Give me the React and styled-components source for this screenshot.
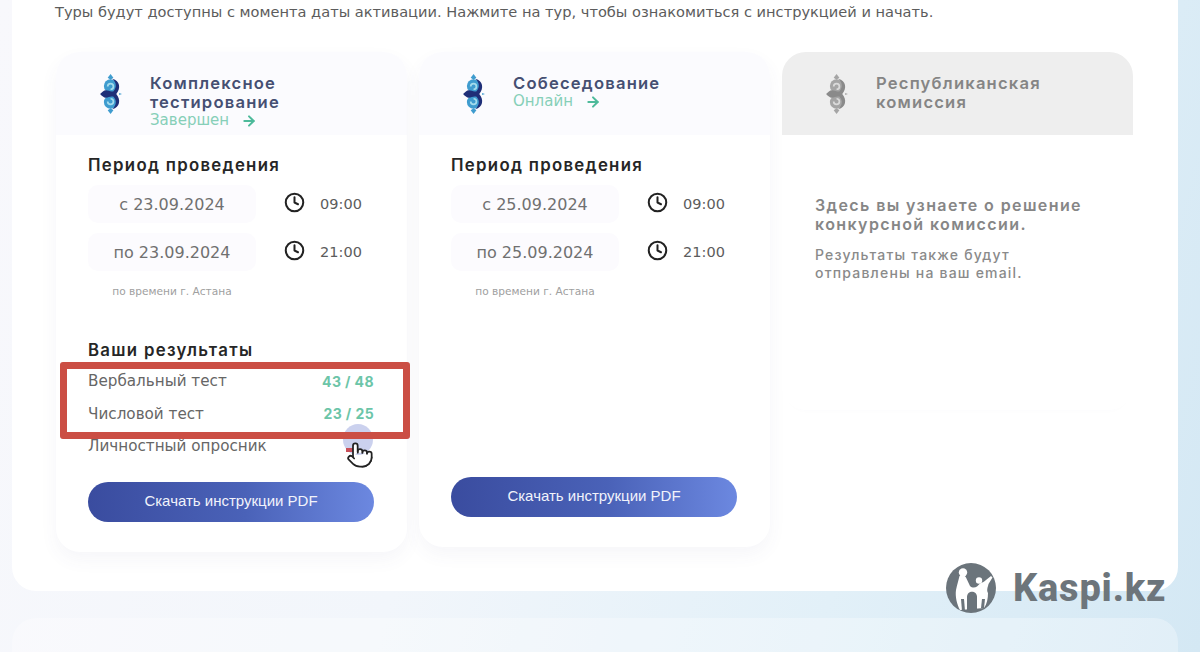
import React from 'react';
import styled, { createGlobalStyle } from 'styled-components';
import { ArrowRight, Clock, Pointer } from 'lucide-react';

const GlobalStyle = createGlobalStyle`
    html, body {
        margin: 0;
        height: 652px;
        overflow: hidden;
    }
    body {
        font-family: 'DejaVu Sans', 'Liberation Sans', sans-serif;
        color: #222;
    }
`;

const tours = [
    {
        id: 1,
        title: ['Комплексное', 'тестирование'],
        status: 'Завершен',
        from: 'с 23.09.2024',
        to: 'по 23.09.2024',
        height: 500,
        results: [
            { name: 'Вербальный тест', value: '43 / 48' },
            { name: 'Числовой тест', value: '23 / 25' },
            { name: 'Личностный опросник', value: '' },
        ],
    },
    {
        id: 2,
        title: ['Собеседование'],
        status: 'Онлайн',
        from: 'с 25.09.2024',
        to: 'по 25.09.2024',
        height: 495,
    },
];

const Ornament = ({ dark = '#1f2f78', light = '#3f9ccf', pale = '#a5dcec' }) => (
    <svg width="23" height="40" viewBox="0 0 24 42" fill="none">
        <path d="M11 0l3 4-3 2-3-2z" fill={light} />
        <path d="M11 42l3-4-3-2-3 2z" fill={light} />
        <circle cx="11" cy="12.5" r="7" fill={light} />
        <circle cx="11" cy="29.5" r="7" fill={light} />
        <path d="M8 13a3 3 0 1 1 3 3" stroke={pale} strokeWidth="1.8" />
        <path d="M8 29a3 3 0 1 0 3-3" stroke={pale} strokeWidth="1.8" />
        <path d="M13 5c8 2 9 10 4 16 5 6 4 14-4 16 4-4 5-9 1-13-3-1-5 1-8 1-2 0-4-2-6-4 2-2 4-4 6-4 3 0 5 2 8 1 4-4 3-9-1-13z" fill={dark} />
        <path d="M20 20l3 1-3 1z" fill={light} />
    </svg>
);

const KaspiLogo = () => (
    <svg width="50" height="50" viewBox="0 0 50 50">
        <circle cx="25" cy="25" r="25" fill="#6b747b" />
        <circle cx="17" cy="9.5" r="4.2" fill="#fff" />
        <circle cx="33" cy="17.5" r="3.2" fill="#fff" />
        <path d="M13.5 13C15 11.5 19 12 20 14.5L24 23C26 25 29 25 31 23.5L34 20.5C36 19.5 38 19 40 17L45 13L46.5 14.5L42.5 21C41.5 25 40.5 27 42 30C42 35 41 41 38 45L14 47C11 42 9 33 10 27C11 22 12.5 17 13.5 13Z" fill="#fff" />
        <path d="M21 49V34C21 27 31 27 31 34V49Z" fill="#6b747b" />
        <path d="M15 36h3l1 12h-3z" fill="#6b747b" />
        <path d="M36 36h3l-1 9h-3z" fill="#6b747b" />
    </svg>
);

const Card = ({ tour }) => (
    <CardBox $height={tour.height}>
        <CardHeader>
            <LogoSlot><Ornament /></LogoSlot>
            <div>
                {tour.title.map((line) => <TitleLine key={line}>{line}</TitleLine>)}
                <Status>
                    {tour.status}
                    <ArrowRight size={16} strokeWidth={3} color="#4dba9a" />
                </Status>
            </div>
        </CardHeader>
        <CardBody>
            <SectionTitle>Период проведения</SectionTitle>
            <DateRow>
                <DatePill>{tour.from}</DatePill>
                <TimeBox><ClockIcon size={21} strokeWidth={2.3} /><span>09:00</span></TimeBox>
            </DateRow>
            <DateRow>
                <DatePill>{tour.to}</DatePill>
                <TimeBox><ClockIcon size={21} strokeWidth={2.3} /><span>21:00</span></TimeBox>
            </DateRow>
            <Note>по времени г. Астана</Note>
            {tour.results && (
                <Results>
                    <ResultsTitle>Ваши результаты</ResultsTitle>
                    {tour.results.map((row) => (
                        <ResultRow key={row.name}>
                            <span>{row.name}</span>
                            <Score>{row.value}</Score>
                        </ResultRow>
                    ))}
                    <CursorHalo />
                    <PendingDash />
                    <Highlight />
                    <CursorHand><Pointer size={28} strokeWidth={1.5} color="#222" fill="#fff" /></CursorHand>
                </Results>
            )}
            <PdfButton>Скачать инструкции PDF</PdfButton>
        </CardBody>
    </CardBox>
);

const App = () => (
    <Page>
        <GlobalStyle />
        <Panel>
            <Intro>Туры будут доступны с момента даты активации. Нажмите на тур, чтобы ознакомиться с инструкцией и начать.</Intro>
            <Cards>
                {tours.map((tour) => <Card key={tour.id} tour={tour} />)}
                <CardBox $height={358} $faded>
                    <CardHeader $muted>
                        <LogoSlot>
                            <Ornament dark="#8a8a8a" light="#a5a5a5" pale="#dadada" />
                        </LogoSlot>
                        <div>
                            <TitleLine $muted>Республиканская</TitleLine>
                            <TitleLine $muted>комиссия</TitleLine>
                        </div>
                    </CardHeader>
                    <CommissionBody>
                        <CommissionLead>Здесь вы узнаете о решение конкурсной комиссии.</CommissionLead>
                        <CommissionText>Результаты также будут отправлены на ваш email.</CommissionText>
                    </CommissionBody>
                </CardBox>
            </Cards>
        </Panel>
        <NextPanel />
        <Watermark>
            <KaspiLogo />
            <span>Kaspi.kz</span>
        </Watermark>
    </Page>
);

export default App;

const Page = styled.div`
    position: relative;
    height: 652px;
    overflow: hidden;
    padding: 0 22px 0 12px;
    box-sizing: border-box;
    background: linear-gradient(105deg, #f8f8fc 0%, #f2f6fb 40%, #e2f0f8 72%, #d4e8f4 100%);
`;

const Panel = styled.section`
    height: 591px;
    box-sizing: border-box;
    padding: 3px 44px 0 43px;
    background: #fff;
    border-radius: 0 0 24px 24px;
`;

const Intro = styled.p`
    margin: 0 0 31px;
    font-size: 14.6px;
    line-height: 18px;
    color: #5c5c5c;
    white-space: nowrap;
`;

const Cards = styled.div`
    display: flex;
    align-items: flex-start;
    gap: 12px;
    margin-left: 1px;
`;

const CardBox = styled.article`
    width: 351px;
    height: ${(p) => p.$height}px;
    flex: none;
    display: flex;
    flex-direction: column;
    border-radius: 24px;
    background: #fff;
    box-shadow: ${(p) => (p.$faded ? '0 6px 10px -10px rgba(70, 80, 140, 0.06)' : '0 8px 18px rgba(70, 80, 140, 0.05)')};
`;

const CardHeader = styled.header`
    height: 83px;
    flex: none;
    display: flex;
    align-items: flex-start;
    box-sizing: border-box;
    padding-top: 22px;
    border-radius: 24px 24px 0 0;
    background: ${(p) => (p.$muted ? '#eeeeee' : '#fbfbfe')};
`;

const LogoSlot = styled.div`
    width: 94px;
    flex: none;
    padding-left: 44px;
    box-sizing: border-box;
`;

const TitleLine = styled.div`
    font-family: 'Inter', sans-serif;
    font-size: 16.6px;
    line-height: 19px;
    font-weight: 600;
    letter-spacing: 1.2px;
    color: ${(p) => (p.$muted ? '#858585' : '#454f72')};
`;

const Status = styled.div`
    display: flex;
    align-items: center;
    gap: 12px;
    font-size: 15px;
    line-height: 17px;
    color: #86cfb8;
`;

const CardBody = styled.div`
    flex: 1;
    display: flex;
    flex-direction: column;
    padding: 20px 33px 30px 32px;
`;

const SectionTitle = styled.h3`
    margin: 0;
    font-family: 'Inter', sans-serif;
    font-size: 16.8px;
    line-height: 20px;
    font-weight: 600;
    letter-spacing: 1.3px;
    color: #262626;
`;

const ResultsTitle = styled(SectionTitle)`
    margin-bottom: 5px;
`;

const DateRow = styled.div`
    display: flex;
    align-items: center;
    height: 38px;
    margin-top: 10px;
`;

const DatePill = styled.div`
    width: 168px;
    height: 38px;
    flex: none;
    display: flex;
    align-items: center;
    justify-content: center;
    border-radius: 10px;
    background: #fcfbfe;
    font-size: 16px;
    color: #707070;
`;

const TimeBox = styled.div`
    width: 134px;
    flex: none;
    display: flex;
    align-items: center;
    justify-content: center;
    gap: 15px;
    font-size: 14.5px;
    color: #5c5c5c;
`;

const ClockIcon = styled(Clock)`
    margin-bottom: 3px;
    color: #222;
`;

const Note = styled.div`
    width: 168px;
    margin-top: 13px;
    text-align: center;
    font-size: 10.6px;
    line-height: 14px;
    color: #a0a0a0;
`;

const Results = styled.div`
    position: relative;
    margin-top: 42px;
    margin-bottom: 16px;
`;

const ResultRow = styled.div`
    display: flex;
    justify-content: space-between;
    align-items: center;
    height: 32.5px;
    font-size: 15.2px;
    color: #666;
`;

const Score = styled.span`
    font-family: 'Inter', sans-serif;
    font-weight: 700;
    font-size: 14px;
    letter-spacing: 0.4px;
    color: #6cc5a8;
`;

const CursorHalo = styled.div`
    position: absolute;
    left: 255px;
    top: 84px;
    width: 30px;
    height: 31px;
    border-radius: 50%;
    background: rgba(130, 145, 215, 0.42);
`;

const PendingDash = styled.div`
    position: absolute;
    left: 258px;
    top: 108px;
    width: 9px;
    height: 4px;
    background: #c8505a;
`;

const Highlight = styled.div`
    position: absolute;
    left: -28px;
    top: 22px;
    width: 350px;
    height: 77px;
    box-sizing: border-box;
    border: 7px solid #cb4e44;
    border-radius: 3px;
`;

const CursorHand = styled.div`
    position: absolute;
    left: 258px;
    top: 101px;
    line-height: 0;
`;

const PdfButton = styled.button`
    width: 286px;
    height: 40px;
    margin-top: auto;
    padding: 0 0 3px;
    border: 0;
    border-radius: 20px;
    background: linear-gradient(90deg, #3a4c9f 0%, #4a62b8 55%, #6c88e0 100%);
    font-family: 'Liberation Sans', sans-serif;
    font-size: 15px;
    color: #f1f3fb;
`;

const CommissionBody = styled.div`
    padding: 61px 40px 0 33px;
`;

const CommissionLead = styled.p`
    margin: 0 0 12px;
    max-width: 290px;
    font-family: 'Inter', sans-serif;
    font-size: 16px;
    line-height: 19px;
    font-weight: 600;
    letter-spacing: 1.4px;
    color: #868686;
`;

const CommissionText = styled.p`
    margin: 0;
    max-width: 240px;
    font-family: 'Inter', sans-serif;
    font-size: 14px;
    line-height: 17.5px;
    font-weight: 500;
    letter-spacing: 1.2px;
    color: #8a8a8a;
`;

const NextPanel = styled.div`
    height: 80px;
    margin-top: 27px;
    border-radius: 24px 24px 0 0;
    background: rgba(255, 255, 255, 0.3);
`;

const Watermark = styled.div`
    position: absolute;
    left: 946px;
    top: 563px;
    display: flex;
    align-items: center;
    gap: 17px;
    font-family: 'Roboto', sans-serif;
    font-weight: 800;
    font-size: 38px;
    letter-spacing: 0.8px;
    color: #6d757b;
`;
